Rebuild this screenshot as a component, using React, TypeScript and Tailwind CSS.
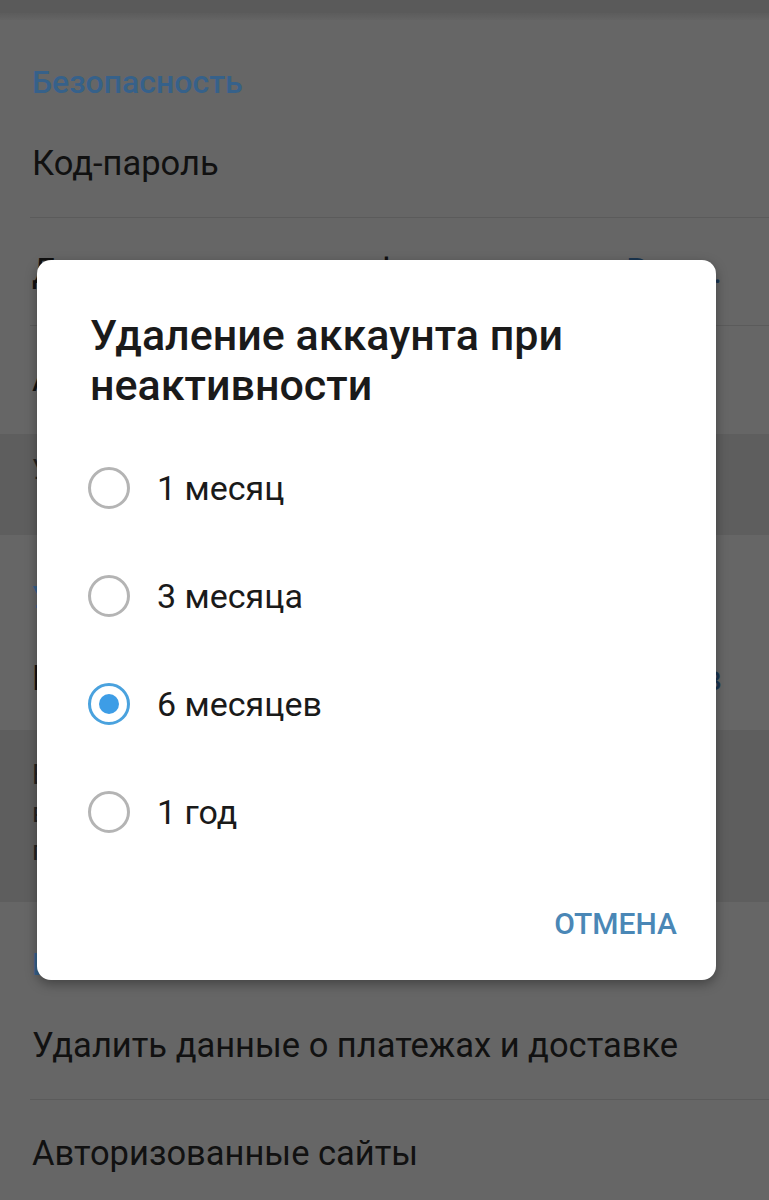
import React from "react";

const options = ["1 месяц", "3 месяца", "6 месяцев", "1 год"];

function Radio({ checked }: { checked: boolean }) {
  return checked ? (
    <div className="w-[42px] h-[42px] rounded-full border-[3.5px] border-[#4aa2de] flex items-center justify-center shrink-0">
      <div className="w-[20px] h-[20px] rounded-full bg-[#3d9de6]" />
    </div>
  ) : (
    <div className="w-[42px] h-[42px] rounded-full border-[3.5px] border-[#b4b4b4] shrink-0" />
  );
}

function Row({ label, value, divider }: { label: string; value?: string; divider?: boolean }) {
  return (
    <div className="relative h-[108px] flex items-center justify-between pl-[32px] pr-[47px]">
      <span className="text-[34.5px] text-[#111]">{label}</span>
      {value && <span className="text-[34.5px] text-[#1a3550]">{value}</span>}
      {divider && <div className="absolute left-[30px] right-0 bottom-0 h-px bg-[#5b5b5b]" />}
    </div>
  );
}

function Header({ title }: { title: string }) {
  return (
    <div className="h-[90px] pl-[32px] pt-[43px] text-[32px] leading-[38px] font-medium text-[#36618a]">
      {title}
    </div>
  );
}

export default function App() {
  return (
    <div className="relative w-[769px] h-[1200px] overflow-hidden bg-[#666666] font-['Roboto',sans-serif]">
      {/* dimmed settings page */}
      <div className="h-[13px] bg-[#5a5a5a]" />
      <div className="h-[7px] bg-gradient-to-b from-[#5c5c5c] to-[#646464]" />

      <div className="bg-[#666666]">
        <Header title="Безопасность" />
        <Row label="Код-пароль" divider />
        <Row label="Двухэтапная аутентификация" value="Выкл." divider />
        <Row label="Активные сеансы" />
      </div>

      <div className="h-[101px] bg-[#5e5e5e] pl-[32px] pr-[70px] pt-[18px] text-[28px] leading-[36px] text-[#222]">
        Управление сеансами на других устройствах.
      </div>

      <div className="h-[195px] bg-[#666666]">
        <Header title="Удалить мой аккаунт" />
        <Row label="Если я не захожу" value="6 месяцев" />
      </div>

      <div className="h-[172px] bg-[#5e5e5e] pl-[32px] pr-[70px] pt-[26px] text-[28px] leading-[38px] text-[#222]">
        Если Вы ни разу не загрузите Telegram за это время, аккаунт будет удалён вместе со всеми группами,
        сообщениями и контактами.
      </div>

      <div className="bg-[#666666]">
        <Header title="Боты и сайты" />
        <Row label="Удалить данные о платежах и доставке" divider />
        <Row label="Авторизованные сайты" />
      </div>

      {/* dialog */}
      <div className="absolute left-[37px] top-[260px] w-[679px] h-[720px] bg-white rounded-[14px] shadow-[0_4px_12px_rgba(0,0,0,0.35)] flex flex-col">
        <div className="pl-[53px] pr-[40px] pt-[50px] text-[43px] leading-[50px] font-medium text-[#1a1a1a]">
          Удаление аккаунта при неактивности
        </div>
        <div className="mt-[24px] flex flex-col">
          {options.map((o, i) => (
            <div key={o} className="h-[108px] flex items-center pl-[51px] gap-[27px]">
              <Radio checked={i === 2} />
              <span className="text-[34px] text-[#1a1a1a]">{o}</span>
            </div>
          ))}
        </div>
        <div className="h-[114px] flex items-center justify-end pr-[39px]">
          <span className="text-[30px] font-medium text-[#4a87b6]">ОТМЕНА</span>
        </div>
      </div>
    </div>
  );
}
